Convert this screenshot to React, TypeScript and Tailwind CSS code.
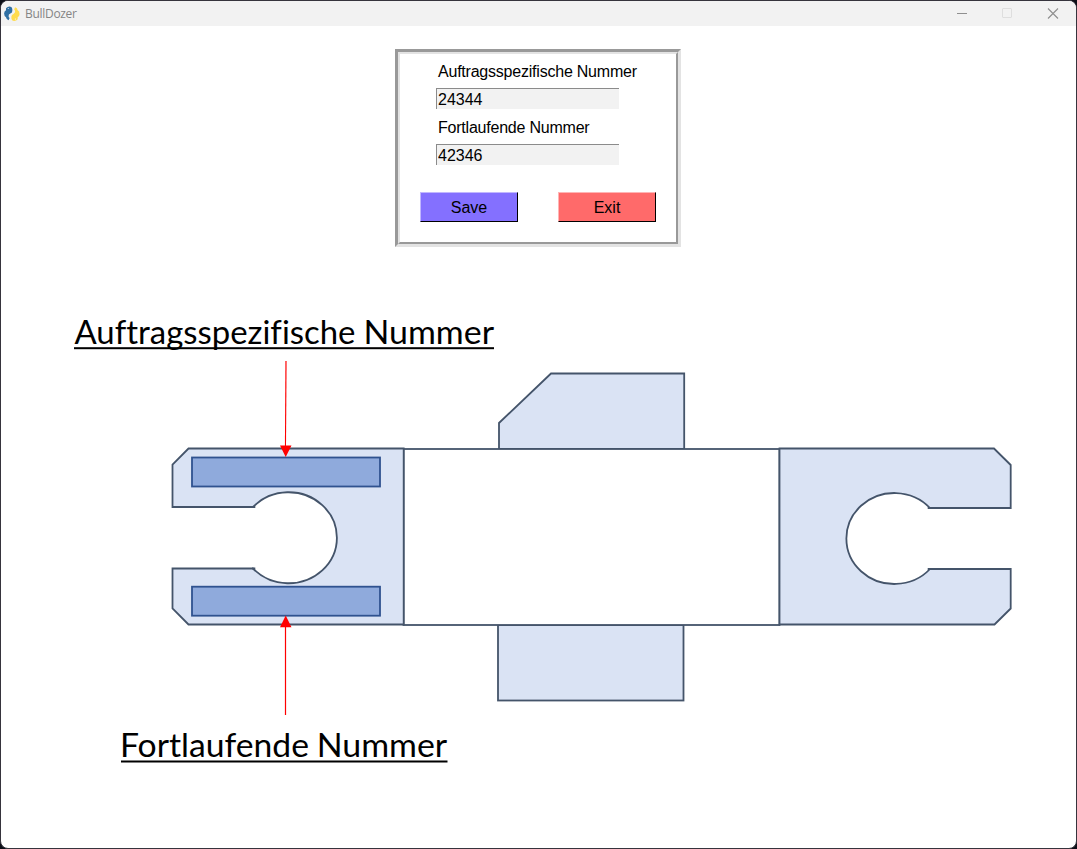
import { useState } from "react";

function PythonIcon() {
  const snake = "M2 2.300Q3.500.5 5.800.6 8.200.8 8.300 3V5Q8.200 7 6.300 7.600 4.400 8.300 4.600 10.200 4.600 11.300 5.600 12L4.600 14.200Q2.200 13.500 2 11.300.2 10.500.1 7.600.2 5 2 4.200Z";
  return (
    <svg width="16" height="16" viewBox="0 0 16 16" className="shrink-0">
      <path d={snake} fill="#2f6fa3" />
      <path d={snake} fill="#ffdc4e" transform="rotate(180 7.850 7.750)" />
      <circle cx="4.300" cy="2.500" r=".6" fill="#dcebf5" />
      <circle cx="11.400" cy="13" r=".6" fill="#fff" />
    </svg>
  );
}

function TitleBar() {
  return (
    <header className="flex h-[25px] shrink-0 items-center bg-[#f2f2f2] pl-[3px] pr-[17px]">
      <PythonIcon />
      <span className="ml-[5px] grow font-['Open_Sans',sans-serif] text-[12px] leading-4 tracking-[-0.3px] text-[#858585]">BullDozer</span>
      <div className="flex items-center gap-[35px]">
        <svg width="10" height="12" viewBox="0 0 10 12"><path d="M0 5.500h10" stroke="#8f8f8f" /></svg>
        <svg width="10" height="12" viewBox="0 0 10 12"><rect x=".5" y=".5" width="9" height="9" rx=".5" fill="none" stroke="#dedede" /></svg>
        <svg width="12" height="12" viewBox="0 0 12 12"><path d="m1 .5 10 10M11 .5 1 10.500" stroke="#8f8f8f" strokeWidth="1.100" /></svg>
      </div>
    </header>
  );
}

type FieldProps = { label: string; value: string; onChange: (value: string) => void };

function Field({ label, value, onChange }: FieldProps) {
  return (
    <label className="flex h-14 flex-col">
      <span className="flex h-[27px] items-start pl-[2px] pt-[3px] leading-[18px] tracking-[-0.22px]">{label}</span>
      <input
        className="mt-px h-[21px] w-[183px] border-l border-t border-[#8b8b8b] bg-[#f2f2f2] p-0 pl-px pt-[2px] leading-[18px] outline-none"
        value={value}
        onChange={(event) => onChange(event.target.value)}
      />
    </label>
  );
}

function NumberForm() {
  const [order, setOrder] = useState("24344");
  const [serial, setSerial] = useState("42346");
  return (
    <form
      onSubmit={(event) => event.preventDefault()}
      className="ml-[394px] mt-[23px] h-[198px] w-[286px] shrink-0 border-[3px] border-b-[#e3e3e3] border-l-[#999] border-r-[#e3e3e3] border-t-[#999] font-['Liberation_Sans',Arial,sans-serif] text-base text-black"
    >
      <div className="h-full border-2 border-b-[#999] border-l-[#e3e3e3] border-r-[#999] border-t-[#e3e3e3] pt-[6px]">
        <div className="pl-9">
          <Field label="Auftragsspezifische Nummer" value={order} onChange={setOrder} />
          <Field label="Fortlaufende Nummer" value={serial} onChange={setSerial} />
        </div>
        <div className="mt-5 flex gap-10 pl-5">
          <button className="h-[30px] w-[98px] border border-b-black border-l-[#c1b7ff] border-r-black border-t-[#c1b7ff] bg-[#8470ff] pt-[2px] leading-5">Save</button>
          <button className="h-[30px] w-[98px] border border-b-black border-l-[#ffb5b5] border-r-black border-t-[#ffb5b5] bg-[#ff6a6a] pt-[2px] leading-5">Exit</button>
        </div>
      </div>
    </form>
  );
}

function PartDrawing() {
  return (
    <svg width="1075" height="601" viewBox="1 247 1075 601" className="shrink-0">
      <g fill="#dae3f4" stroke="#44546a" strokeWidth="1.800">
        <path d="M499 449V423L551 373.500H684.200V449Z" />
        <rect x="498" y="625" width="185.500" height="75.500" />
        <rect x="403.500" y="449" width="376" height="176" fill="#fff" />
        <path d="M188.500 448.500H403.700V624.500H188.500L172.500 608.500V568.500H253A48.300 45.500 0 1 0 253 507H172.500V464.500Z" />
        <path d="M779.500 448.500H994L1010.700 465V508H930A48 45.500 0 1 0 930 569H1010.700V608.500L994.500 624.500H779.500Z" />
        <path d="M252 507H255.300M252 568.500H255.300M927.700 508H931M927.700 569H931" />
      </g>
      <g fill="#8faadc" stroke="#2f528f" strokeWidth="1.800">
        <rect x="192" y="457.500" width="188" height="29" />
        <rect x="192" y="586.700" width="188" height="29" />
      </g>
      <g fill="#ff0000">
        <path d="M285.400 361H286.600L286 448H284.900Z" />
        <rect x="284.900" y="625" width="1.200" height="90" />
        <path d="M280 445.500h11.500L285.700 457ZM280 627.300h11.500L285.700 615.500Z" />
      </g>
      <g fill="#000" fontFamily="Lato, Carlito, sans-serif" fontSize="33" style={{ fontVariantLigatures: "none" }}>
        <text x="74.500" y="343.700" textLength="281" lengthAdjust="spacingAndGlyphs">Auftragsspezifische</text>
        <text x="363.500" y="343.700" textLength="130.500" lengthAdjust="spacingAndGlyphs">Nummer</text>
        <rect x="74" y="347.200" width="420" height="2" />
        <text x="120" y="756.700" textLength="189" lengthAdjust="spacingAndGlyphs">Fortlaufende</text>
        <text x="316.700" y="756.700" textLength="130.500" lengthAdjust="spacingAndGlyphs">Nummer</text>
        <rect x="121" y="760.500" width="326.500" height="2" />
      </g>
    </svg>
  );
}

export default function App() {
  return (
    <div className="h-[849px] w-[1077px] overflow-hidden bg-[#0d0f18]">
      <main className="flex h-full flex-col overflow-hidden rounded-lg border border-[#36343d] bg-white">
        <TitleBar />
        <NumberForm />
        <PartDrawing />
      </main>
    </div>
  );
}
